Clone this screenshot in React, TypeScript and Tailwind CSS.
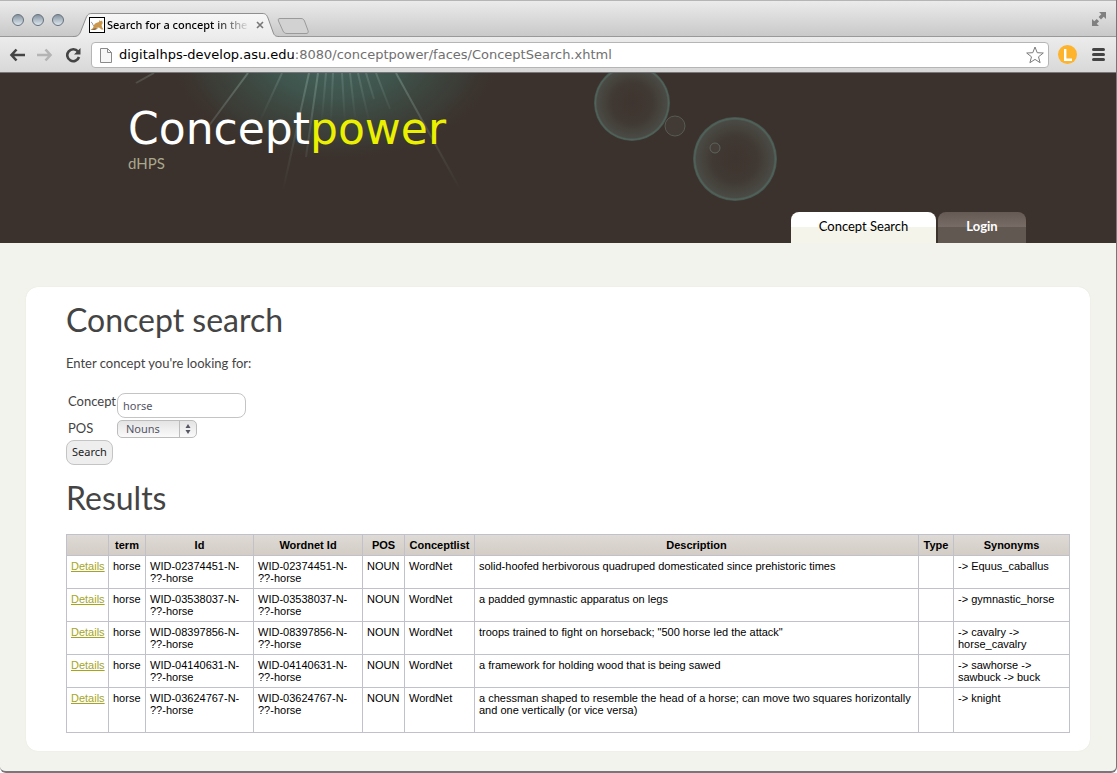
import { useState } from 'react';

interface Concept {
  id: string;
  description: string;
  synonyms: string;
}

const RESULTS: Concept[] = [
  {
    id: 'WID-02374451-N-??-horse',
    description: 'solid-hoofed herbivorous quadruped domesticated since prehistoric times',
    synonyms: '-> Equus_caballus',
  },
  {
    id: 'WID-03538037-N-??-horse',
    description: 'a padded gymnastic apparatus on legs',
    synonyms: '-> gymnastic_horse',
  },
  {
    id: 'WID-08397856-N-??-horse',
    description: 'troops trained to fight on horseback; "500 horse led the attack"',
    synonyms: '-> cavalry -> horse_cavalry',
  },
  {
    id: 'WID-04140631-N-??-horse',
    description: 'a framework for holding wood that is being sawed',
    synonyms: '-> sawhorse -> sawbuck -> buck',
  },
  {
    id: 'WID-03624767-N-??-horse',
    description:
      'a chessman shaped to resemble the head of a horse; can move two squares horizontally and one vertically (or vice versa)',
    synonyms: '-> knight',
  },
];

const COLUMNS = [
  { label: '', width: 'w-[42px]' },
  { label: 'term', width: 'w-[37px]' },
  { label: 'Id', width: 'w-[108px]' },
  { label: 'Wordnet Id', width: 'w-[109px]' },
  { label: 'POS', width: 'w-[42px]' },
  { label: 'Conceptlist', width: 'w-[70px]' },
  { label: 'Description', width: '' },
  { label: 'Type', width: 'w-[35px]' },
  { label: 'Synonyms', width: 'w-[116px]' },
];

function TabStrip() {
  return (
    <div className="relative flex h-[37px] border-t border-[#b5b5b5] bg-linear-to-b from-[#ebebeb] to-[#c8c8c8]">
      <div className="flex items-center gap-2 pl-3 pt-[2px]">
        <TrafficLight label="Close" />
        <TrafficLight label="Minimize" />
        <TrafficLight label="Zoom" />
      </div>

      {/* Bottom rule of the strip, the active tab covers it */}
      <div className="absolute inset-x-0 bottom-0 h-px bg-[#999999]" />

      {/* Active tab */}
      <div className="relative ml-2 flex w-[208px] items-end">
        <svg className="absolute inset-0 h-full w-full" viewBox="0 0 208 36" aria-hidden="true">
          <defs>
            <linearGradient id="tab" x1="0" y1="0" x2="0" y2="1">
              <stop offset="0" stopColor="#f7f7f7" />
              <stop offset="1" stopColor="#ececec" />
            </linearGradient>
          </defs>
          <path
            d="M2 36C6 35 7 34 8.500 31L14 17C15.500 13.500 16.500 12.500 20 12.500H190C193.500 12.500 194.500 13.500 196 17L201 31C202 34 203 35 207 36Z"
            fill="url(#tab)"
          />
          <path
            d="M1 35.500C6 35.500 7 34 8.500 31L14 17C15.500 13.500 16.500 12.500 20 12.500H190C193.500 12.500 194.500 13.500 196 17L201 31C202 34 203 35.500 207 35.500"
            fill="none"
            stroke="#8f8f8f"
          />
        </svg>
        <div className="relative flex h-6 items-center pl-[17px]">
          <Favicon />
          <span className="ml-[2px] w-[143px] overflow-hidden whitespace-nowrap bg-linear-to-r from-black from-75% to-transparent bg-clip-text font-['Noto_Sans',sans-serif] text-[11px] font-medium leading-4 text-transparent">
            Search for a concept in the
          </span>
          <button type="button" aria-label="Close tab" className="ml-[6px] text-[#777777]">
            <svg className="h-2 w-2" viewBox="0 0 8 8" stroke="currentColor" strokeWidth="1.600">
              <path d="M1 1l6 6M7 1l-6 6" />
            </svg>
          </button>
        </div>
      </div>

      <button type="button" aria-label="New tab" className="-ml-1 h-9 pt-3">
        <svg className="h-5 w-9" viewBox="0 0 36 20">
          <path
            d="M4 3.500H25C27 3.500 27.800 4.500 28.500 6L32 15.500C32.700 17.500 32 18.500 30 18.500H11C8.500 18.500 8 17.500 7 16L2.500 6C2 4.500 2 3.500 4 3.500Z"
            fill="#d2d2d2"
            stroke="#9a9a9a"
          />
        </svg>
      </button>

      <button type="button" aria-label="Full screen" className="ml-auto mr-[9px] text-[#808080]">
        <svg className="h-4 w-4" viewBox="0 0 16 16" fill="currentColor">
          <path d="M8 1h7v7l-2.300-2.300-2.700 2.700-2.400-2.400 2.700-2.700z" />
          <path d="M1 8l2.300 2.300 2.400-2.400 2.400 2.400-2.400 2.400L8 15H1z" />
        </svg>
      </button>
    </div>
  );
}

function TrafficLight({ label }: { label: string }) {
  return (
    <button
      type="button"
      aria-label={label}
      className="h-3 w-3 rounded-full border border-[#66717b] bg-linear-to-b from-[#8795a1] to-[#dce6ee]"
    />
  );
}

function Favicon() {
  return (
    <svg className="h-4 w-4" viewBox="0 0 16 16" aria-hidden="true">
      <rect x="0.500" y="0.500" width="15" height="15" fill="#ffffff" stroke="#000000" />
      <path d="M5 8c1-2 3-2.500 5-3l.5-2 1 1.300L13 3.500l.8 2.500-1.300 2 .5 2 1.500 2.500h-2L10 10.500 7 11l-4 2H1.500l2.500-2z" fill="#c9964c" />
      <path d="M2 13l4-2 3 .5-3 1.500z" fill="#8a6a42" />
      <path d="M5 9C3 8.500 4.500 6 2 5" fill="none" stroke="#999999" />
    </svg>
  );
}

function Toolbar() {
  return (
    <div className="flex h-9 items-center border-b border-[#77777b] bg-linear-to-b from-[#ececec] to-[#d8d8d8] pl-[9px] pr-[11px]">
      <button type="button" aria-label="Back" className="text-[#444444]">
        <svg className="h-4 w-4" viewBox="0 0 16 16" fill="none" stroke="currentColor" strokeWidth="2.600">
          <path d="M7.500 2.500L2.500 8l5 5.500M2.500 8H16" />
        </svg>
      </button>
      <button type="button" aria-label="Forward" className="ml-3 text-[#b4b4b4]">
        <svg className="h-4 w-4" viewBox="0 0 16 16" fill="none" stroke="currentColor" strokeWidth="2.600">
          <path d="M8.500 2.500l5 5.500-5 5.500M13.500 8H0" />
        </svg>
      </button>
      <button type="button" aria-label="Reload" className="ml-3 text-[#444444]">
        <svg className="h-4 w-4" viewBox="0 0 16 16">
          <path d="M13 4.500A6 6 0 1 0 14 10" fill="none" stroke="currentColor" strokeWidth="2.600" />
          <path d="M15.500 1v6.500H9z" fill="currentColor" />
        </svg>
      </button>

      <div className="ml-[10px] flex h-[26px] flex-1 items-center rounded-sm border border-[#b5b5b5] bg-white pl-2 pr-1">
        <svg className="h-4 w-3" viewBox="0 0 12 16" fill="#f7f7f7" stroke="#8a8a8a" aria-hidden="true">
          <path d="M0.500 1.500h7l4 4v10H0.500z" />
          <path d="M7.500 1.500v4h4" fill="none" />
        </svg>
        <a
          href="#url"
          className="ml-[7px] flex-1 whitespace-nowrap font-['DejaVu_Sans',sans-serif] text-[13px] leading-5 text-[#707070]"
        >
          <span className="text-black">digitalhps-develop.asu.edu</span>
          :8080/conceptpower/faces/ConceptSearch.xhtml
        </a>
        <button type="button" aria-label="Bookmark this page">
          <svg className="h-[18px] w-[18px]" viewBox="0 0 18 18" fill="#ffffff" stroke="#7b7b7b" strokeLinejoin="round">
            <path d="M9 1l2.200 5.700 6.100.3-4.800 3.800 1.600 5.900L9 13.400l-5.100 3.300 1.600-5.900L.7 7l6.100-.3z" />
          </svg>
        </button>
      </div>

      <button
        type="button"
        aria-label="Extension"
        className="ml-[9px] flex h-[19px] w-[19px] items-center justify-center rounded-full bg-[#fdb32c]"
      >
        <svg className="h-3 w-2" viewBox="0 0 8 12" fill="none" stroke="#ffffff" strokeWidth="2.400">
          <path d="M1.200 0v10.800H8" />
        </svg>
      </button>
      <button type="button" aria-label="Menu" className="ml-[15px] flex flex-col gap-[2px]">
        <span className="h-[3px] w-[13px] rounded-full bg-[#444444]" />
        <span className="h-[3px] w-[13px] rounded-full bg-[#444444]" />
        <span className="h-[3px] w-[13px] rounded-full bg-[#444444]" />
      </button>
    </div>
  );
}

function HeaderArt() {
  return (
    <svg className="absolute left-0 top-0 h-[170px] w-[800px]" viewBox="0 0 800 170" aria-hidden="true">
      <defs>
        <radialGradient id="glow">
          <stop offset="0" stopColor="#45665f" />
          <stop offset="0.400" stopColor="#3f5850" stopOpacity="0.900" />
          <stop offset="0.800" stopColor="#3c443d" stopOpacity="0.550" />
          <stop offset="1" stopColor="#3b322d" stopOpacity="0" />
        </radialGradient>
        <linearGradient id="ray" gradientUnits="userSpaceOnUse" x1="0" y1="0" x2="0" y2="118">
          <stop offset="0" stopColor="#9fb8b0" stopOpacity="0.350" />
          <stop offset="1" stopColor="#9fb8b0" stopOpacity="0" />
        </linearGradient>
        <linearGradient id="shortRay" gradientUnits="userSpaceOnUse" x1="0" y1="0" x2="0" y2="50">
          <stop offset="0" stopColor="#9fb8b0" stopOpacity="0.250" />
          <stop offset="1" stopColor="#9fb8b0" stopOpacity="0" />
        </linearGradient>
        <radialGradient id="bubble">
          <stop offset="0" stopColor="#3f3530" />
          <stop offset="0.500" stopColor="#403832" />
          <stop offset="0.920" stopColor="#4a4a44" />
          <stop offset="0.960" stopColor="#50645c" />
          <stop offset="1" stopColor="#46514b" />
        </radialGradient>
      </defs>
      <ellipse cx="335" cy="-16" rx="165" ry="104" fill="url(#glow)" />
      <g stroke="url(#ray)" strokeWidth="2">
        <path d="M248 0L208 54M309 0L282 122M318 0L306 84M396 0L460 116" />
      </g>
      <g stroke="url(#shortRay)" strokeWidth="2">
        <path d="M282 0L260 48M326 0L322 46M333 0L331 46M342 0L345 52M350 0L355 44M358 0L374 70M366 0L374 26M376 0L390 36M154 0L136 10" />
      </g>
      <circle cx="632" cy="30" r="38" fill="url(#bubble)" />
      <circle cx="735" cy="86" r="42" fill="url(#bubble)" />
      <circle cx="675" cy="53" r="10" fill="#423a34" stroke="#565b54" />
      <circle cx="715" cy="75" r="5" fill="#463f39" stroke="#5f635d" />
    </svg>
  );
}

function SiteHeader() {
  return (
    <header className="relative flex h-[170px] items-end justify-between overflow-hidden bg-[#3b322d] pl-32 pr-[90px]">
      <HeaderArt />
      <div className="relative self-start pt-8">
        <h1 className="font-['DejaVu_Sans',sans-serif] text-[44px] leading-[48px] text-white">
          Concept<span className="text-[#ebf000]">power</span>
        </h1>
        <p className="font-['Lato',sans-serif] text-[15px] leading-5 text-[#a9a78c]">dHPS</p>
      </div>
      <nav className="relative flex gap-[2px] text-center font-['Lato',sans-serif] text-[13px] leading-7">
        <a
          href="#search"
          className="h-[31px] w-[145px] rounded-t-lg bg-linear-to-b from-white from-50% to-[#f4f4ea] to-50% text-black"
        >
          Concept Search
        </a>
        <a
          href="#login"
          className="h-[31px] w-[88px] rounded-t-lg bg-linear-to-b from-[#655a54] via-[#776c66] via-50% to-[#625852] to-50% font-bold text-white"
        >
          Login
        </a>
      </nav>
    </header>
  );
}

function SearchForm() {
  const [term, setTerm] = useState('horse');
  const [pos, setPos] = useState('Nouns');

  return (
    <form
      className="mt-[22px] font-['Lato',sans-serif] text-[13px] text-[#444444]"
      onSubmit={(e) => e.preventDefault()}
    >
      <div className="grid grid-cols-[49px_auto] justify-start gap-x-[2px] gap-y-[2px]">
        <label htmlFor="concept" className="pl-[2px] leading-4">Concept</label>
        <input
          id="concept"
          type="text"
          value={term}
          onChange={(e) => setTerm(e.target.value)}
          className="h-[25px] w-[129px] rounded-lg border border-[#c4c4c4] bg-white px-[5px] font-['Noto_Sans',sans-serif] text-[11px] text-[#555566]"
        />
        <label htmlFor="pos" className="pl-[2px] leading-4">POS</label>
        <div className="relative w-20">
          <select
            id="pos"
            value={pos}
            onChange={(e) => setPos(e.target.value)}
            className="block h-[18px] w-full appearance-none rounded-[5px] border border-[#bcbcbc] bg-linear-to-b from-[#e4e4e4] to-[#fafafa] pl-2 font-['Noto_Sans',sans-serif] text-[11px] leading-4 text-[#555566]"
          >
            <option>Nouns</option>
            <option>Verbs</option>
            <option>Adverbs</option>
            <option>Adjectives</option>
          </select>
          <svg
            className="pointer-events-none absolute right-0 top-0 h-[18px] w-[18px]"
            viewBox="0 0 18 18"
            fill="#555566"
            aria-hidden="true"
          >
            <path d="M0 1h1v16H0z" fill="#bcbcbc" />
            <path d="M9 4l2.500 4h-5zM9 14l2.500-4h-5z" />
          </svg>
        </div>
      </div>
      <button
        type="submit"
        className="mt-[2px] block h-[25px] w-[47px] rounded-lg border border-[#c4c4c4] bg-[#eeeeee] font-['Noto_Sans',sans-serif] text-[11px] text-[#222222]"
      >
        Search
      </button>
    </form>
  );
}

// Long ids may wrap in front of the "??" part
function ConceptId({ id }: { id: string }) {
  const [head, tail] = id.split('??');
  return (
    <>
      {head}
      <wbr />??{tail}
    </>
  );
}

function ResultsTable() {
  return (
    <table className="w-full table-fixed border-collapse font-['Liberation_Sans',Arial,sans-serif] text-[11px] leading-3 text-black">
      <thead>
        <tr className="h-[21px] bg-linear-to-b from-[#dedad5] to-[#d3ccc5]">
          {COLUMNS.map((col) => (
            <th key={col.label} className={`border border-[#c1c1cc] p-0 font-bold ${col.width}`}>
              {col.label}
            </th>
          ))}
        </tr>
      </thead>
      <tbody className="[&_td]:border [&_td]:border-[#c1c1cc] [&_td]:px-1 [&_td]:pt-1 [&_td]:align-top">
        {RESULTS.map((row) => (
          <tr key={row.id} className="h-[33px] last:h-[45px]">
            <td>
              <a href={`#${row.id}`} className="text-[#a5a51c] underline">Details</a>
            </td>
            <td>horse</td>
            <td><ConceptId id={row.id} /></td>
            <td><ConceptId id={row.id} /></td>
            <td>NOUN</td>
            <td>WordNet</td>
            <td>{row.description}</td>
            <td />
            <td>{row.synonyms}</td>
          </tr>
        ))}
      </tbody>
    </table>
  );
}

export default function App() {
  return (
    <div className="flex min-h-screen flex-col overflow-hidden rounded-b-md border-b-2 border-r border-[#77777b] bg-[#f3f3ed]">
      <TabStrip />
      <Toolbar />
      <SiteHeader />
      <main className="mx-[26px] mb-5 mt-11 flex-1 rounded-xl bg-white pb-[18px] pl-10 pr-5 pt-3 shadow-[0_0_1px_#d8d8cc]">
        <h2 className="font-['Lato',sans-serif] text-[32px] leading-[42px] text-[#444444]">Concept search</h2>
        <p className="mt-[14px] font-['Lato',sans-serif] text-[13px] leading-4 text-[#444444]">
          Enter concept you're looking for:
        </p>
        <SearchForm />
        <h2 className="mb-[15px] mt-3 font-['Lato',sans-serif] text-[32px] leading-[42px] text-[#444444]">Results</h2>
        <ResultsTable />
      </main>
    </div>
  );
}
